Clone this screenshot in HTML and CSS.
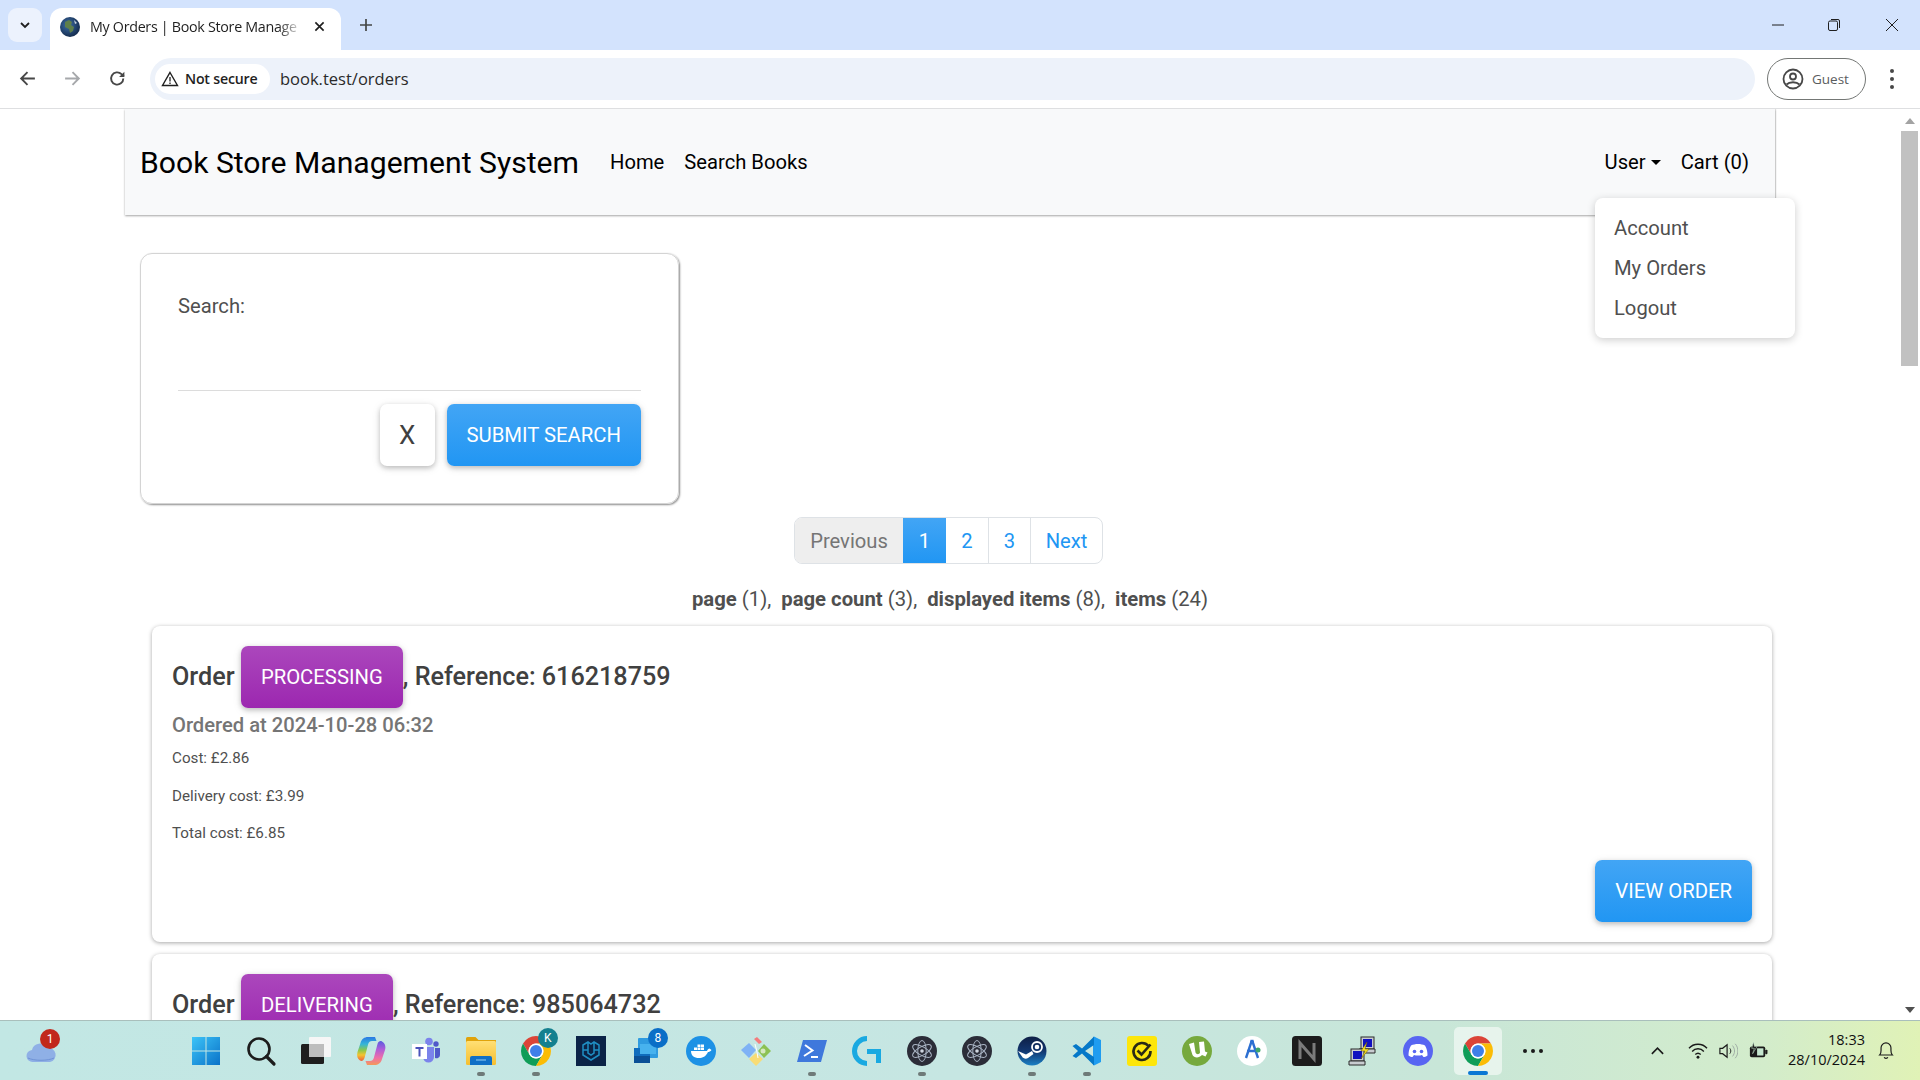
FILE: index.html
```html
<!DOCTYPE html>
<html lang="en">
<head>
<meta charset="utf-8">
<title>My Orders | Book Store Management System</title>
<link rel="stylesheet" href="styles.css">
</head>
<body>
<svg class="defs" width="0" height="0" aria-hidden="true">
  <defs>
    <symbol id="chrome" viewBox="4 4 40 40">
      <path fill="#db4437" d="M6.680 14A20 20 0 0 1 41.320 14H24A10 10 0 0 0 15.340 29z"/>
      <path fill="#0f9d58" d="M6.680 14L15.340 29A10 10 0 0 0 32.660 29L24 44A20 20 0 0 1 6.680 14z"/>
      <path fill="#fbbc05" d="M41.320 14A20 20 0 0 1 24 44L32.660 29A10 10 0 0 0 24 14z"/>
      <circle cx="24" cy="24" r="10" fill="#fff"/>
      <circle cx="24" cy="24" r="8" fill="#3f7fe8"/>
    </symbol>
    <symbol id="electron" viewBox="0 0 30 30">
      <circle cx="15" cy="15" r="15" fill="#2b2d38"/>
      <g fill="none" stroke="#a9b4c4" stroke-width="1">
        <ellipse cx="15" cy="15" rx="10.500" ry="4.200" transform="rotate(30 15 15)"/>
        <ellipse cx="15" cy="15" rx="10.500" ry="4.200" transform="rotate(90 15 15)"/>
        <ellipse cx="15" cy="15" rx="10.500" ry="4.200" transform="rotate(150 15 15)"/>
      </g>
      <circle cx="15" cy="15" r="1.800" fill="#cfd6e0"/>
    </symbol>
    <linearGradient id="winblue" x1="0" y1="0" x2="1" y2="1"><stop offset="0" stop-color="#3cc4f8"/><stop offset="1" stop-color="#0a72c8"/></linearGradient>
    <linearGradient id="copleft" x1="0" y1="0" x2="0" y2="1"><stop offset="0" stop-color="#2a78e4"/><stop offset=".3" stop-color="#35b6d8"/><stop offset=".55" stop-color="#8cc84b"/><stop offset=".75" stop-color="#f4c430"/><stop offset="1" stop-color="#ee5d3f"/></linearGradient>
    <linearGradient id="copright" x1="0" y1="0" x2="0" y2="1"><stop offset="0" stop-color="#5a5be0"/><stop offset=".35" stop-color="#b05ed8"/><stop offset=".7" stop-color="#ee6fa8"/><stop offset="1" stop-color="#f49a5a"/></linearGradient>
    <linearGradient id="folder" x1="0" y1="0" x2="0" y2="1"><stop offset="0" stop-color="#ffdf75"/><stop offset="1" stop-color="#f6bf2f"/></linearGradient>
    <radialGradient id="earth" cx=".4" cy=".4" r=".7"><stop offset="0" stop-color="#3d6fa8"/><stop offset="1" stop-color="#0f2342"/></radialGradient>
    <linearGradient id="steam" x1="0" y1="0" x2="0" y2="1"><stop offset="0" stop-color="#0e1f45"/><stop offset=".5" stop-color="#12366f"/><stop offset="1" stop-color="#1a7fc4"/></linearGradient>
  </defs>
</svg>

<div class="window">
  <header class="tabstrip">
    <div class="tabsearch">
      <svg class="ico12" viewBox="0 0 12 12"><path d="M2 4l4 4 4-4" fill="none" stroke="#1f1f1f" stroke-width="1.800"/></svg>
    </div>
    <div class="tab">
      <svg class="favicon" viewBox="0 0 20 20">
        <circle cx="10" cy="10" r="10" fill="url(#earth)"/>
        <path d="M5 5l4-2 3 2-1 3 3 2-1 4-3 2-1-4-4-2z" fill="#5f7f4a"/>
        <path d="M14 3l3 3-2 1z" fill="#c8d4de"/>
      </svg>
      <span class="tabtitle">My Orders | Book Store Manage</span>
      <svg class="tabclose" viewBox="0 0 12 12"><path d="M1.500 1.500l9 9M10.500 1.500l-9 9" stroke="#1f1f1f" stroke-width="1.800"/></svg>
    </div>
    <svg class="newtab" viewBox="0 0 14 14"><path d="M7 1v12M1 7h12" stroke="#444746" stroke-width="1.700"/></svg>
    <div class="winctl">
      <svg class="ctl" viewBox="0 0 14 14"><path d="M1 7h12" stroke="#1f1f1f" stroke-width="1"/></svg>
      <svg class="ctl" viewBox="0 0 14 14"><rect x="1.500" y="3" width="9" height="9.500" rx="1.500" fill="none" stroke="#1f1f1f"/><path d="M4 1.500h7a1.500 1.500 0 0 1 1.500 1.500v7" fill="none" stroke="#1f1f1f"/></svg>
      <svg class="ctl" viewBox="0 0 14 14"><path d="M1 1l12 12M13 1L1 13" stroke="#1f1f1f" stroke-width="1"/></svg>
    </div>
  </header>

  <div class="toolbar">
    <svg class="navico" viewBox="0 0 18 18"><path d="M16 9H3M9 3L3 9l6 6" fill="none" stroke="#474747" stroke-width="1.800"/></svg>
    <svg class="navico" viewBox="0 0 18 18"><path d="M2 9h13M9 3l6 6-6 6" fill="none" stroke="#a6a8ab" stroke-width="1.800"/></svg>
    <svg class="navico" viewBox="0 0 18 18"><path d="M14.500 9a5.800 5.800 0 1 1-1.700-4.100L15 7" fill="none" stroke="#474747" stroke-width="1.800"/><path d="M15.500 2.500V7.500H10.500z" fill="#474747"/></svg>
    <div class="omnibox">
      <div class="chip">
        <svg class="warn" viewBox="0 0 18 18"><path d="M9 2.500L16.500 15.500H1.500z" fill="none" stroke="#1f1f1f" stroke-width="1.400"/><path d="M9 7v4.500M9 12.500v1.500" stroke="#1f1f1f" stroke-width="1.300"/></svg>
        <span>Not secure</span>
      </div>
      <span class="url">book.test/orders</span>
    </div>
    <div class="guest">
      <svg class="guestico" viewBox="0 0 22 22"><circle cx="11" cy="11" r="9.500" fill="none" stroke="#474747" stroke-width="1.800"/><circle cx="11" cy="8.500" r="3" fill="none" stroke="#474747" stroke-width="1.800"/><path d="M4.500 16.500c3-3 10-3 13 0" fill="none" stroke="#474747" stroke-width="1.800"/></svg>
      <span>Guest</span>
    </div>
    <div class="kebab"><i></i><i></i><i></i></div>
  </div>

  <div class="viewport">
    <main class="page">
      <div class="container">
        <nav class="navbar">
          <a class="brand">Book Store Management System</a>
          <a class="navlink">Home</a>
          <a class="navlink">Search Books</a>
          <div class="navright">
            <a class="navlink caret">User</a>
            <a class="navlink">Cart (0)</a>
          </div>
          <ul class="dropdown">
            <li>Account</li>
            <li>My Orders</li>
            <li>Logout</li>
          </ul>
        </nav>

        <form class="searchcard">
          <label class="searchlabel">Search:</label>
          <div class="searchinput"></div>
          <div class="searchactions">
            <span class="btn btn-light">X</span>
            <span class="btn btn-primary">Submit Search</span>
          </div>
        </form>

        <ul class="pagination">
          <li class="pg disabled">Previous</li>
          <li class="pg active">1</li>
          <li class="pg">2</li>
          <li class="pg">3</li>
          <li class="pg">Next</li>
        </ul>

        <p class="stats"><b>page</b> (1),&nbsp; <b>page count</b> (3),&nbsp; <b>displayed items</b> (8),&nbsp; <b>items</b> (24)</p>

        <article class="order">
          <h5 class="ordertitle">Order <span class="btn btn-purple">Processing</span>, Reference: 616218759</h5>
          <h6 class="orderdate">Ordered at 2024-10-28 06:32</h6>
          <p class="cost">Cost: £2.86</p>
          <p class="cost">Delivery cost: £3.99</p>
          <p class="cost">Total cost: £6.85</p>
          <div class="orderactions"><span class="btn btn-primary">View Order</span></div>
        </article>

        <article class="order">
          <h5 class="ordertitle">Order <span class="btn btn-purple">Delivering</span>, Reference: 985064732</h5>
        </article>
      </div>
    </main>
    <aside class="scrollbar">
      <svg class="sbarrow" viewBox="0 0 10 6"><path d="M5 0l5 6H0z" fill="#a3a3a3"/></svg>
      <div class="sbtrack"><div class="sbthumb"></div></div>
      <svg class="sbarrow" viewBox="0 0 10 6"><path d="M5 6L0 0h10z" fill="#505050"/></svg>
    </aside>
  </div>

  <footer class="taskbar">
    <div class="weather">
      <svg class="cloud" viewBox="0 0 30 22"><path d="M7 21a6 6 0 0 1-1-12 8 8 0 0 1 15-2 7 7 0 0 1 3 14z" fill="#8fb0e6"/><path d="M2 17c6 3 20 3 26 0" stroke="#6f93d6" fill="none"/></svg>
      <span class="wbadge">1</span>
    </div>
    <div class="apps">
      <div class="app"><svg class="i30" viewBox="0 0 30 30"><path fill="url(#winblue)" d="M1 1h13.500v13.500H1zM15.500 1H29v13.500H15.500zM1 15.500h13.500V29H1zM15.500 15.500H29V29H15.500z"/></svg></div>
      <div class="app"><svg class="i30" viewBox="0 0 30 30"><circle cx="13" cy="13" r="10.500" fill="none" stroke="#1c1c1c" stroke-width="2.600"/><path d="M20.500 20.500L28 28" stroke="#1c1c1c" stroke-width="3.200" stroke-linecap="round"/></svg></div>
      <div class="app"><svg class="i30" viewBox="0 0 30 30"><rect x="0" y="8" width="23" height="20" rx="1.500" fill="#1e1e1e"/><rect x="8" y="1" width="22" height="20" rx="1" fill="#f6f6f6"/><rect x="8" y="8" width="15" height="13" fill="#bdbdbd"/></svg></div>
      <div class="app"><svg class="i30" viewBox="0 0 30 30"><path d="M12 1h7l1.500 4H16c-2 0-3.200 1-3.800 3L8.500 22c-1 3-3 3.500-4.500 2.500-2.500-1.500-3.500-4.500-2.500-8.500l3-9c1-4 4-6 7.500-6z" fill="url(#copleft)"/><path d="M26 5.500c3 1.500 4 5 3 8.500l-3 9c-1 4-4 6-7.500 6H11l-1.500-4H14c2 0 3.200-1 3.800-3L21.500 8c1-3 3-3.500 4.500-2.500z" fill="url(#copright)"/></svg></div>
      <div class="app"><svg class="i30" viewBox="0 0 30 30"><circle cx="18" cy="5.500" r="3.800" fill="#7b83eb"/><circle cx="25" cy="8" r="2.700" fill="#5059c9"/><path d="M12 11h11v10a5.500 5.500 0 0 1-11 0z" fill="#7b83eb"/><path d="M24 12h5v7a3.500 3.500 0 0 1-5 3z" fill="#5059c9"/><rect x="1" y="8" width="15" height="15" fill="#fff"/><path d="M4.500 11h8v2h-3v7.500h-2V13h-3z" fill="#4b53bc"/></svg></div>
      <div class="app has-dot"><svg class="i30" viewBox="0 0 30 30"><path d="M0 2.500A1.500 1.500 0 0 1 1.500 1h8l3 3H30v6H0z" fill="#e0a30b"/><rect y="5" width="30" height="24" rx="1.500" fill="url(#folder)"/><path d="M4 22a2 2 0 0 1 2-2h18a2 2 0 0 1 2 2v7H4z" fill="#0f6fc6"/><path d="M10 24h10" stroke="#7fc0ee" stroke-width="1.200"/></svg></div>
      <div class="app has-dot has-badge"><svg class="i30" viewBox="0 0 30 30"><use href="#chrome"/></svg><span class="appbadge teal">K</span></div>
      <div class="app"><svg class="i30" viewBox="0 0 30 30"><rect width="30" height="30" fill="#0b2347"/><path d="M7 9l5-3 3 2 3-2 5 3v10l-8 5-8-5zM12 6v11l3 2 3-2V6M7 14h5M18 14h5" fill="none" stroke="#1f8ec4" stroke-width="1.500"/></svg></div>
      <div class="app has-badge"><svg class="i30" viewBox="0 0 30 30"><rect x="7" y="2" width="20" height="20" rx="1" fill="#2f9be0"/><rect x="3" y="12" width="16" height="15" fill="#0f6cbd"/><rect x="3" y="20" width="16" height="7" fill="#0a4f96"/><rect x="9" y="8" width="16" height="10" fill="#47b2ee"/></svg><span class="appbadge blue">8</span></div>
      <div class="app"><svg class="i30" viewBox="0 0 30 30"><circle cx="15" cy="15" r="15" fill="#1d91e5"/><path d="M5 15h16c.5-1.500 1.500-2.500 2.500-2.500l2 1.500c-1 1.500-2.500 2-3.500 2-2 4.500-5.500 6-9 6-5 0-8-2.500-8-7z" fill="#fff"/><path d="M8 11.500h3V14H8zM11.500 11.500h3V14h-3zM15 11.500h3V14h-3zM11.500 8.500h3V11h-3zM15 8.500h3V11h-3z" fill="#fff"/></svg></div>
      <div class="app"><svg class="i30" viewBox="0 0 30 30"><path d="M13 3l3-2 5 5-3 2z" fill="#f47c7c"/><path d="M8 7l7 7-7 8-8-8z" fill="#7fb2f5"/><path d="M23 8l7 7-7 7-6-7z" fill="#8cc152"/><path d="M15 17l7 6-7 7-7-7z" fill="#f8dc75"/><path d="M14 8l2 8M16 16l1 6" stroke="#fff" stroke-width="1" fill="none"/><circle cx="22" cy="15" r="2.500" fill="#d6e8c0"/></svg></div>
      <div class="app has-dot"><svg class="i30" viewBox="0 0 30 30"><path d="M6 4h24l-6 22H0z" fill="#3f78dc"/><path d="M8 9l7.500 5.500L7 20" fill="none" stroke="#fff" stroke-width="2"/><path d="M14 21h7" stroke="#fff" stroke-width="2"/></svg></div>
      <div class="app"><svg class="i30" viewBox="0 0 30 30"><path d="M15 2.500a12.500 12.500 0 0 0 0 25" fill="none" stroke="#19a9e1" stroke-width="5"/><path d="M15 13h14v14h-5v-9h-9z" fill="#19a9e1"/></svg></div>
      <div class="app has-dot"><svg class="i30" viewBox="0 0 30 30"><use href="#electron"/></svg></div>
      <div class="app"><svg class="i30" viewBox="0 0 30 30"><use href="#electron"/></svg></div>
      <div class="app has-dot"><svg class="i30" viewBox="0 0 30 30"><circle cx="15" cy="15" r="14.500" fill="url(#steam)"/><circle cx="20" cy="11" r="5" fill="none" stroke="#fff" stroke-width="1.800"/><circle cx="20" cy="11" r="2.300" fill="#fff"/><path d="M1 15l8 3.500 6-3.500 1.500 3-5.500 4c-2 1.500-5 .5-6-1.500z" fill="#fff"/></svg></div>
      <div class="app has-dot"><svg class="i30" viewBox="0 0 30 30"><path d="M22 .5l7 3.500v22l-7 3.500-1-1V1.500z" fill="#1f9cf0"/><path d="M22 .5L10 12.500 4 8 .5 10 6 15 .5 20 4 22l6-4.500L22 29.500V21l-9-6 9-6z" fill="#0578c8"/></svg></div>
      <div class="app"><svg class="i30" viewBox="0 0 30 30"><rect width="30" height="30" rx="3" fill="#fde60b"/><path d="M21.500 10a8.500 8.500 0 1 0 2 5" fill="none" stroke="#2a2a16" stroke-width="2.600"/><path d="M10.500 14.500l4 4 9-10" fill="none" stroke="#2a2a16" stroke-width="2.600"/></svg></div>
      <div class="app"><svg class="i30" viewBox="0 0 30 30"><circle cx="15" cy="15" r="15" fill="#76a93d"/><path d="M7 8l5-1.500 1.500 10c1 2.500 4 2 4.500 0L17 6l5-.5 1 10 2.500 1-2 4-3.500-1.500c-3 3.500-8 3-9.500 0z" fill="#fff"/></svg></div>
      <div class="app"><svg class="i30" viewBox="0 0 30 30"><circle cx="15" cy="15" r="15" fill="#fff"/><path d="M15 4l6 18M15 4L9 22M10 15h10" fill="none" stroke="#2c6fd1" stroke-width="2.400"/><circle cx="15" cy="6" r="2" fill="#2c6fd1"/><circle cx="21" cy="14" r="2.500" fill="#3ca66a"/></svg></div>
      <div class="app"><svg class="i30" viewBox="0 0 30 30"><rect width="30" height="30" rx="3.500" fill="#1c1c1c"/><path d="M8 23V7l14 16V7" fill="none" stroke="#7b7b7b" stroke-width="3"/></svg></div>
      <div class="app"><svg class="i30" viewBox="0 0 30 30"><rect x="13" y="1" width="13" height="12" fill="#c9ccd0" stroke="#2a2a2a"/><rect x="15" y="3" width="9" height="8" fill="#1010c0"/><path d="M11 13h16v4H11z" fill="#c9ccd0" stroke="#2a2a2a"/><rect x="3" y="13" width="13" height="12" fill="#c9ccd0" stroke="#2a2a2a"/><rect x="5" y="15" width="9" height="8" fill="#1010c0"/><path d="M1 25h16v4H1z" fill="#c9ccd0" stroke="#2a2a2a"/><path d="M19 6l-6 9h4l-4 8 8-10h-4z" fill="#f5e023" stroke="#6d5a00" stroke-width=".5"/></svg></div>
      <div class="app"><svg class="i30" viewBox="0 0 30 30"><circle cx="15" cy="15" r="15" fill="#5865f2"/><path d="M8 9.500c4-2 10-2 14 0 2 3 2.500 7 2.500 10-1.500 1-3 1.500-4 1.500l-1.500-2c-2 .7-6 .7-8 0L9.500 21c-1 0-2.500-.5-4-1.500 0-3 .5-7 2.500-10z" fill="#fff"/><circle cx="11.500" cy="15.500" r="1.800" fill="#5865f2"/><circle cx="18.500" cy="15.500" r="1.800" fill="#5865f2"/></svg></div>
      <div class="app current"><svg class="i30" viewBox="0 0 30 30"><use href="#chrome"/></svg></div>
      <div class="app dots"><i></i><i></i><i></i></div>
    </div>
    <div class="tray">
      <svg class="trayico chev" viewBox="0 0 16 10"><path d="M2 8l6-6 6 6" fill="none" stroke="#1a1a1a" stroke-width="1.700"/></svg>
      <svg class="trayico" viewBox="0 0 22 20"><path d="M1 7c5-6 15-6 20 0M4.500 10.500c3.500-4 9.500-4 13 0M8 14c2-2 4-2 6 0" fill="none" stroke="#1a1a1a" stroke-width="1.500"/><circle cx="11" cy="17" r="1.600" fill="#1a1a1a"/></svg>
      <svg class="trayico" viewBox="0 0 22 20"><path d="M2 7h3l5-4v14l-5-4H2z" fill="none" stroke="#1a1a1a" stroke-width="1.300"/><path d="M13 7c1.500 2 1.500 4 0 6" fill="none" stroke="#1a1a1a"/><path d="M16 4c3 3.500 3 8.500 0 12M19 2c4 4.500 4 11.500 0 16" fill="none" stroke="#9aa5a0"/></svg>
      <svg class="trayico batt" viewBox="0 0 22 20"><rect x="2" y="5" width="17" height="12" rx="2" fill="#1a1a1a"/><rect x="19" y="8.500" width="2.500" height="5" rx="1" fill="#1a1a1a"/><rect x="10" y="7" width="7" height="8" fill="#c5e6cf"/><path d="M6 0L4 7h3l-2 6 5-8H7z" fill="#1a1a1a" stroke="#c5e6cf" stroke-width=".6"/></svg>
      <div class="clock"><span>18:33</span><span>28/10/2024</span></div>
      <svg class="bell" viewBox="0 0 20 22"><path d="M3 16c1-1 1.500-2 1.500-5V8a5.500 5.500 0 0 1 11 0v3c0 3 .5 4 1.500 5z" fill="none" stroke="#1a1a1a" stroke-width="1.300"/><path d="M8 18.500c.5 1.600 3.500 1.600 4 0" fill="none" stroke="#1a1a1a" stroke-width="1.300"/></svg>
    </div>
  </footer>
</div>
</body>
</html>
```

FILE: styles.css
```css
* { box-sizing: border-box; }
html, body { margin: 0; padding: 0; height: 100%; overflow: hidden; }
body { font-family: Roboto, "Liberation Sans", sans-serif; font-size: 20.200px; line-height: 30px; color: #4f4f4f; background: #fff; }
.defs { position: absolute; }
i { display: block; }

.window { display: flex; flex-direction: column; height: 1080px; }

/* browser tab strip */
.tabstrip { height: 50px; flex: none; background: #d3e3fd; display: flex; align-items: flex-end; padding-left: 8px; font-family: "Open Sans", "Noto Sans", sans-serif; }
.tabsearch { width: 34px; height: 34px; margin-bottom: 8px; border-radius: 9px; background: #ecf2fd; display: flex; align-items: center; justify-content: center; }
.ico12 { width: 12px; height: 12px; }
.tab { width: 291px; height: 42px; margin-left: 8px; background: #fff; border-radius: 12px 12px 0 0; display: flex; align-items: center; padding: 0 12px 5px 10px; }
.favicon { width: 20px; height: 20px; flex: none; }
.tabtitle { flex: 1; margin-left: 10px; font-size: 14.300px; letter-spacing: -.3px; line-height: 20px; color: #1f1f1f; white-space: nowrap; overflow: hidden; -webkit-mask-image: linear-gradient(90deg, #000 90%, rgba(0,0,0,.15) 100%); mask-image: linear-gradient(90deg, #000 90%, rgba(0,0,0,.15) 100%); }
.tabclose { width: 11px; height: 11px; flex: none; margin: 0 4px 0 15px; }
.newtab { width: 14px; height: 14px; margin: 0 0 18px 18px; }
.winctl { margin-left: auto; display: flex; align-self: flex-start; }
.ctl { width: 14px; height: 14px; margin: 18px 0 0 0; }
.ctl:nth-child(1) { margin-right: 42px; }
.ctl:nth-child(2) { margin-right: 44px; }
.ctl:nth-child(3) { margin-right: 21px; }

/* browser toolbar */
.toolbar { height: 59px; flex: none; background: #fff; border-bottom: 1px solid #dedfe1; border-radius: 10px 10px 0 0; display: flex; align-items: center; padding: 0 0 1px 18px; font-family: "Open Sans", "Noto Sans", sans-serif; }
.navico { width: 19px; height: 19px; flex: none; margin-right: 26px; }
.navico:nth-child(2) { margin-right: 26px; }
.navico:nth-child(3) { margin-right: 23px; }
.omnibox { width: 1605px; height: 42px; border-radius: 21px; background: #edf2fa; display: flex; align-items: center; padding-left: 5px; flex: none; }
.chip { height: 30px; width: 115px; border-radius: 15px; background: #fff; display: flex; align-items: center; padding-left: 6px; font-size: 14.200px; font-weight: 600; line-height: 30px; color: #1f1f1f; white-space: nowrap; letter-spacing: -.2px; }
.warn { width: 18px; height: 18px; margin-right: 6px; flex: none; }
.url { margin-left: 10px; font-size: 16.500px; color: #2a2a2a; line-height: 30px; }
.guest { width: 99px; height: 42px; margin-left: 12px; border: 1px solid #747775; border-radius: 21px; display: flex; align-items: center; padding-left: 14px; font-size: 13.500px; color: #5a5c5e; flex: none; }
.guestico { width: 22px; height: 22px; margin-right: 8px; }
.kebab { margin-left: 24px; display: flex; flex-direction: column; gap: 4px; }
.kebab i { width: 4px; height: 4px; border-radius: 50%; background: #474747; }

/* page viewport */
.viewport { flex: 1; min-height: 0; display: flex; overflow: hidden; }
.page { flex: 1; min-width: 0; overflow: hidden; }
.container { width: 1652px; margin: 0 auto; }

.navbar { position: relative; height: 106px; margin: 0 1px; background: #f8f9fa; box-shadow: 0 1px 2px rgba(0,0,0,.35), 1px 0 1px rgba(0,0,0,.1); display: flex; align-items: center; padding: 0 16px 0 15px; color: #000; }
.brand { font-size: 30.150px; line-height: 40px; margin: 2px 21px 0 0; white-space: nowrap; }
.navlink { padding: 0 10px; white-space: nowrap; }
.navright { margin-left: auto; display: flex; gap: 0; }
.caret { display: flex; align-items: center; gap: 5px; }
.caret::after { content: ""; border-top: 5px solid #000; border-left: 5px solid transparent; border-right: 5px solid transparent; }
.dropdown { position: absolute; right: -20px; top: 89px; width: 200px; height: 140px; margin: 0; padding: 10px 0; list-style: none; background: #fff; border-radius: 8px; box-shadow: 0 2px 8px rgba(0,0,0,.2); z-index: 5; color: #4f4f4f; }
.dropdown li { height: 40px; line-height: 40px; padding-left: 19px; }

.searchcard { display: block; width: 539px; height: 251px; margin: 38px 0 0 16px; padding: 37px 37px 0; border: 1px solid #d4d4d4; border-radius: 12px; box-shadow: 1px 1px 2px rgba(0,0,0,.45); }
.searchlabel { display: block; line-height: 30px; }
.searchinput { height: 70px; border-bottom: 1px solid #dcdcdc; }
.searchactions { display: flex; justify-content: flex-end; gap: 12px; margin-top: 13px; }

.btn { display: inline-flex; align-items: center; justify-content: center; height: 62px; padding: 0 20px; border-radius: 7px; text-transform: uppercase; color: #fff; font-size: 20.300px; font-weight: 400; vertical-align: middle; box-shadow: 0 2px 5px rgba(0,0,0,.2), 0 2px 10px rgba(0,0,0,.1); }
.btn-primary { background: linear-gradient(180deg, #42a5f5, #2196f3); }
.btn-purple { background: linear-gradient(180deg, #ab47bc, #9c27b0); }
.btn-light { width: 55px; padding: 0; background: #fff; color: #404040; font-size: 26px; font-weight: 400; }

.pagination { width: 309px; height: 47px; margin: 13px 0 0 670px; padding: 0; list-style: none; display: flex; border: 1px solid #dee2e6; border-radius: 8px; overflow: hidden; color: #2196f3; }
.pg { display: flex; align-items: center; justify-content: center; width: 42px; border-left: 1px solid #dee2e6; }
.pg.disabled { width: 108px; border-left: 0; background: #eee; color: #757575; }
.pg.active { width: 43px; border-left: 0; background: linear-gradient(180deg, #42a5f5, #2196f3); color: #fff; }
.pg:last-child { flex: 1; }
.pg.active + .pg { border-left: 0; }

.stats { margin: 20px 0 12px; text-align: center; line-height: 30px; font-size: 20.300px; }
.stats b { font-weight: 700; }

.order { margin: 0 4px 12px 28px; padding: 20px; background: #fff; border-radius: 8px; box-shadow: 0 1px 4px rgba(0,0,0,.35); height: 316px; display: flex; flex-direction: column; }
.ordertitle { margin: 0; font-size: 25.200px; line-height: 62px; font-weight: 500; color: #404040; white-space: nowrap; }
.ordertitle .btn { margin-top: -2px; }
.orderdate { margin: 2px 0 7px; font-size: 20.200px; line-height: 30px; font-weight: 500; color: #757575; }
.cost { margin: 0 0 15px; font-size: 15.200px; line-height: 22.400px; }
.orderactions { margin-top: auto; display: flex; justify-content: flex-end; }

/* scrollbar */
.scrollbar { width: 20px; flex: none; display: flex; flex-direction: column; align-items: center; padding: 9px 2px 7px 1px; }
.sbarrow { width: 10px; height: 6px; flex: none; }
.sbtrack { flex: 1; width: 100%; margin-top: 7px; }
.sbthumb { width: 100%; height: 235px; background: #c1c1c1; }

/* taskbar */
.taskbar { position: relative; z-index: 10; height: 60px; flex: none; border-top: 1px solid #a9bfbc; background: linear-gradient(90deg, #c2e7e4 0%, #c6e6e2 50%, #c8e6d8 75%, #d3eccb 92%, #e0f2b6 100%); display: flex; align-items: center; font-family: "Open Sans", "Noto Sans", sans-serif; color: #111; }
.weather { position: relative; width: 178px; flex: none; height: 100%; }
.cloud { width: 32px; height: 22px; margin: 20px 0 0 25px; display: block; }
.wbadge { position: absolute; left: 40px; top: 8px; width: 20px; height: 20px; border-radius: 50%; background: #c1281c; color: #fff; font: 12px/20px Roboto, sans-serif; text-align: center; }
.apps { display: flex; align-items: center; height: 100%; }
.app { position: relative; width: 55.100px; height: 100%; display: flex; align-items: center; justify-content: center; }
.i30 { width: 30px; height: 30px; overflow: visible; }
.has-dot::after { content: ""; position: absolute; left: 50%; bottom: 4px; width: 8px; height: 4px; margin-left: -4px; border-radius: 2px; background: #6e7a78; }
.appbadge { position: absolute; right: 6px; top: 7px; width: 20px; height: 20px; border-radius: 50%; color: #fff; font: 12px/20px Roboto, sans-serif; text-align: center; }
.appbadge.teal { background: #14808f; }
.appbadge.blue { background: #0a6ec7; }
.app.current { width: 48px; height: 48px; margin: 0 3px 0 9px; border-radius: 5px; background: rgba(255,255,255,.55); }
.app.current::after { content: ""; position: absolute; left: 14px; bottom: 0; width: 20px; height: 4px; border-radius: 2px; background: #0a78d4; }
.app.dots { gap: 4px; }
.app.dots i { width: 4px; height: 4px; border-radius: 50%; background: #1a1a1a; }
.tray { margin-left: auto; display: flex; align-items: center; padding-right: 25px; }
.trayico { width: 20px; height: 18px; margin-right: 10px; }
.trayico.batt { margin-right: 13px; }
.chev { width: 15px; height: 10px; margin-right: 23px; }
.clock { display: flex; flex-direction: column; align-items: flex-end; width: 84px; margin: 0 12px 2px 0; font-size: 14.500px; line-height: 20px; white-space: nowrap; }
.bell { width: 18px; height: 21px; }
```
